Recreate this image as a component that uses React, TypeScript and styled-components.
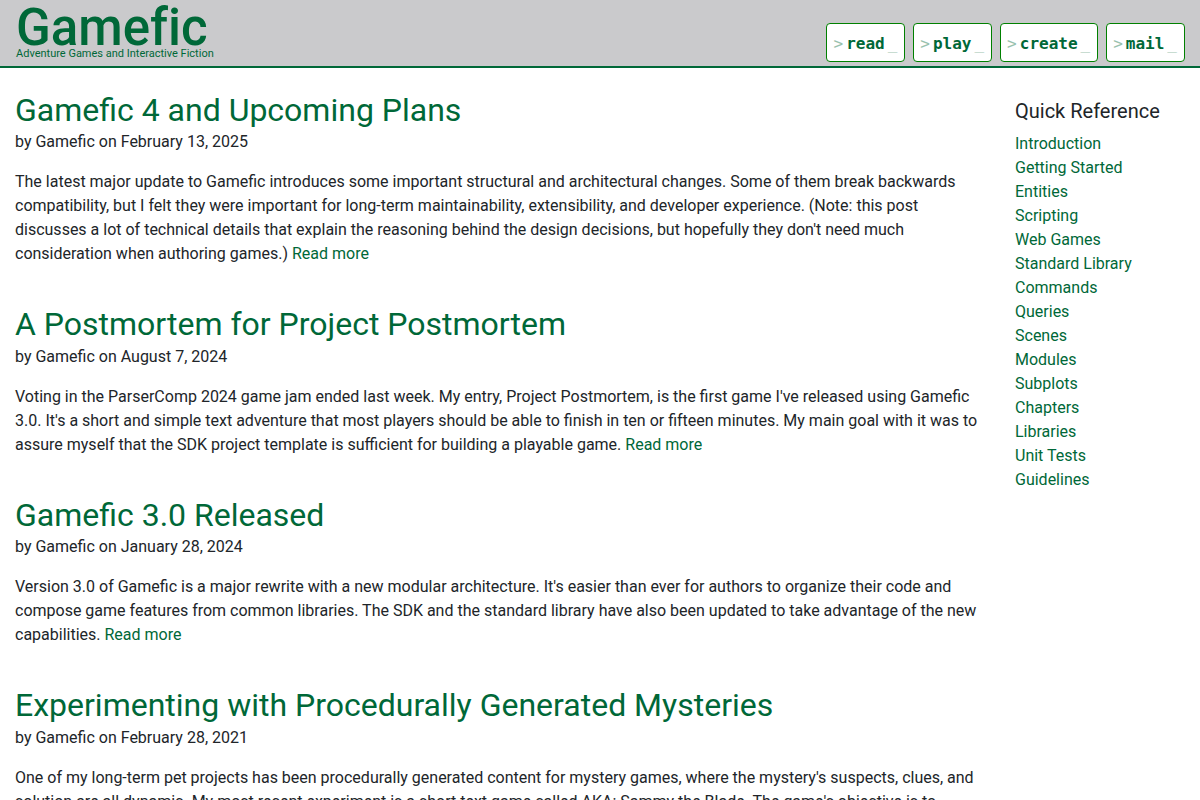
import React from "react";
import styled, { createGlobalStyle } from "styled-components";

const GREEN = "#006838";

const GlobalStyle = createGlobalStyle`
  *, *::before, *::after { box-sizing: border-box; }
  body {
    margin: 0;
    background: #fff;
    color: #212529;
    font-family: Roboto, "Liberation Sans", sans-serif;
    font-size: 16px;
    line-height: 24px;
  }
  a { color: ${GREEN}; text-decoration: none; }
  a:hover { text-decoration: underline; }
`;

const Header = styled.header`
  display: flex;
  justify-content: space-between;
  align-items: flex-end;
  padding: 8px 15px 4px;
  background: #cacacc;
  border-bottom: 2px solid ${GREEN};
`;

const Brand = styled.a`
  display: flex;
  flex-direction: column;
  padding: 0 1px 3px;
  &:hover { text-decoration: none; }
`;

const BrandName = styled.span`
  font-size: 51px;
  line-height: 40px;
  font-weight: 500;
  font-variant-ligatures: none;
`;

const Tagline = styled.span`
  font-size: 11px;
  line-height: 11px;
`;

const Nav = styled.nav`
  display: flex;
  gap: 8px;
`;

const NavLink = styled.a`
  display: flex;
  gap: 3px;
  padding: 8px 7px 5px 6px;
  background: #fff;
  border: 1px solid #008000;
  border-radius: 4px;
  font-family: "DejaVu Sans Mono", monospace;
  font-weight: 700;
  &:hover { text-decoration: none; }
`;

const Prompt = styled.span`
  font-weight: 400;
  opacity: 0.4;
`;

const Columns = styled.div`
  display: grid;
  grid-template-columns: 5fr 1fr;
  padding-top: 23px;
`;

const Posts = styled.main`
  padding: 0 15px;
`;

const Post = styled.article`
  margin-bottom: 39px;
`;

const PostTitle = styled.h2`
  margin: 0 0 1px;
  font-size: 32px;
  line-height: 1.2;
  font-weight: 400;
`;

const Byline = styled.p`
  margin: 0 0 16px;
`;

const Summary = styled.p`
  margin: 0;
`;

const ReadMore = styled.a`
  white-space: nowrap;
`;

const Sidebar = styled.aside`
  padding: 8px 15px;
`;

const SidebarTitle = styled.h5`
  margin: 0 0 9px;
  font-size: 20px;
  line-height: 24px;
  font-weight: 400;
`;

const LinkList = styled.ul`
  margin: 0;
  padding: 0;
  list-style: none;
`;

const commands = ["read", "play", "create", "mail"];

const posts = [
  {
    title: "Gamefic 4 and Upcoming Plans",
    date: "February 13, 2025",
    text: "The latest major update to Gamefic introduces some important structural and architectural changes. Some of them break backwards compatibility, but I felt they were important for long-term maintainability, extensibility, and developer experience. (Note: this post discusses a lot of technical details that explain the reasoning behind the design decisions, but hopefully they don't need much consideration when authoring games.)",
  },
  {
    title: "A Postmortem for Project Postmortem",
    date: "August 7, 2024",
    text: "Voting in the ParserComp 2024 game jam ended last week. My entry, Project Postmortem, is the first game I've released using Gamefic 3.0. It's a short and simple text adventure that most players should be able to finish in ten or fifteen minutes. My main goal with it was to assure myself that the SDK project template is sufficient for building a playable game.",
  },
  {
    title: "Gamefic 3.0 Released",
    date: "January 28, 2024",
    text: "Version 3.0 of Gamefic is a major rewrite with a new modular architecture. It's easier than ever for authors to organize their code and compose game features from common libraries. The SDK and the standard library have also been updated to take advantage of the new capabilities.",
  },
  {
    title: "Experimenting with Procedurally Generated Mysteries",
    date: "February 28, 2021",
    text: "One of my long-term pet projects has been procedurally generated content for mystery games, where the mystery's suspects, clues, and solution are all dynamic. My most recent experiment is a short text game called AKA: Sammy the Blade. The game's objective is to",
  },
];

const references = [
  "Introduction",
  "Getting Started",
  "Entities",
  "Scripting",
  "Web Games",
  "Standard Library",
  "Commands",
  "Queries",
  "Scenes",
  "Modules",
  "Subplots",
  "Chapters",
  "Libraries",
  "Unit Tests",
  "Guidelines",
];

export default function App() {
  return (
    <>
      <GlobalStyle />
      <Header>
        <Brand href="#">
          <BrandName>Gamefic</BrandName>
          <Tagline>Adventure Games and Interactive Fiction</Tagline>
        </Brand>
        <Nav>
          {commands.map((command) => (
            <NavLink key={command} href={`#${command}`}>
              <Prompt>&gt;</Prompt>
              {command}
              <Prompt>_</Prompt>
            </NavLink>
          ))}
        </Nav>
      </Header>
      <Columns>
        <Posts>
          {posts.map((post) => (
            <Post key={post.title}>
              <PostTitle>
                <a href="#post">{post.title}</a>
              </PostTitle>
              <Byline>by Gamefic on {post.date}</Byline>
              <Summary>
                {post.text} <ReadMore href="#post">Read more</ReadMore>
              </Summary>
            </Post>
          ))}
        </Posts>
        <Sidebar>
          <SidebarTitle>Quick Reference</SidebarTitle>
          <LinkList>
            {references.map((name) => (
              <li key={name}>
                <a href="#reference">{name}</a>
              </li>
            ))}
          </LinkList>
        </Sidebar>
      </Columns>
    </>
  );
}
